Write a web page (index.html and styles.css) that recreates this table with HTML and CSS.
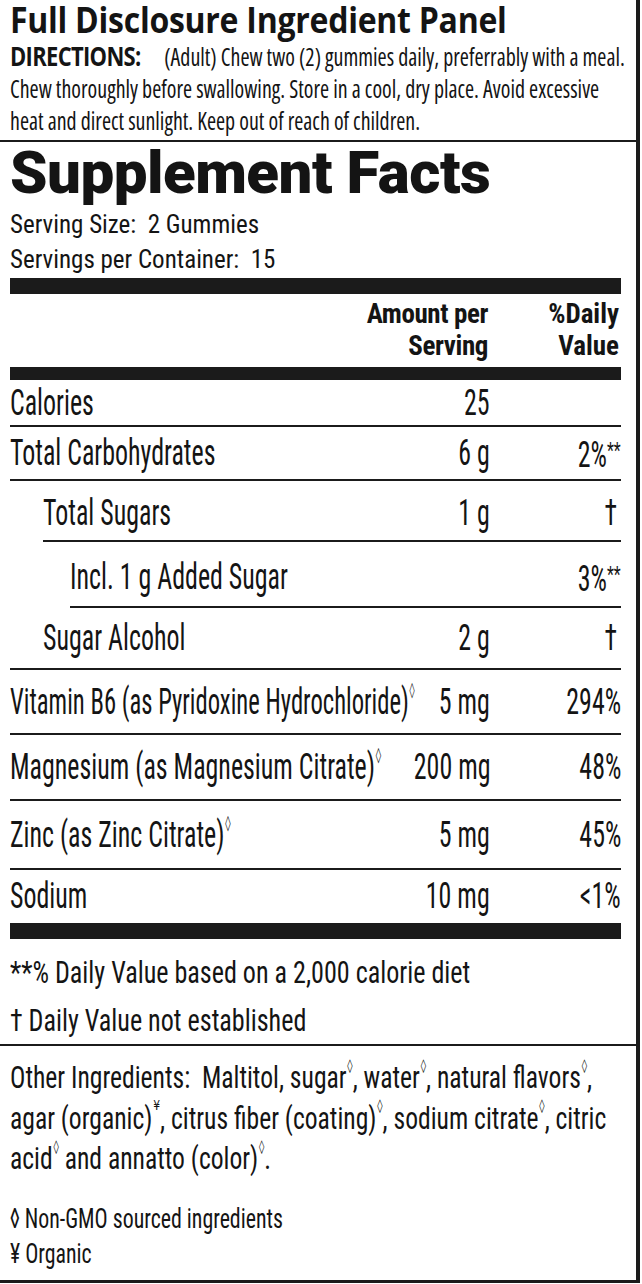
FILE: index.html
```html
<!DOCTYPE html>
<html lang="en">
<head>
<meta charset="utf-8">
<title>Full Disclosure Ingredient Panel</title>
<link rel="stylesheet" href="styles.css">
</head>
<body>
<main class="label">
  <section class="disclosure">
    <h2 class="panel-title"><span class="ln">Full Disclosure Ingredient Panel</span></h2>
    <p class="directions">
      <span class="ln"><b class="dir-head">DIRECTIONS:</b>(Adult) Chew two (2) gummies daily, preferrably with a meal.</span>
      <span class="ln">Chew thoroughly before swallowing. Store in a cool, dry place. Avoid excessive</span>
      <span class="ln">heat and direct sunlight. Keep out of reach of children.</span>
    </p>
  </section>

  <section class="facts">
    <h1 class="facts-title">Supplement Facts</h1>
    <div class="serving">
      <div>Serving Size:&nbsp; 2 Gummies</div>
      <div>Servings per Container:&nbsp; 15</div>
    </div>
    <div class="bar bar-thick"></div>
    <div class="grid head">
      <span></span>
      <span class="h-amt">Amount per<br>Serving</span>
      <span class="h-dv">%Daily<br>Value</span>
    </div>
    <div class="bar bar-mid"></div>

    <div class="grid row r-cal"><span class="n"><span class="sq">Calories</span></span><span class="a"><span class="sq r">25</span></span><span class="d"></span></div>
    <div class="grid row r-carb"><span class="n"><span class="sq">Total Carbohydrates</span></span><span class="a"><span class="sq r">6 g</span></span><span class="d"><span class="sq r">2%<span class="ast">**</span></span></span></div>
    <div class="grid row r-sug sub1"><span class="n"><span class="sq">Total Sugars</span></span><span class="a"><span class="sq r">1 g</span></span><span class="d"><span class="sq r dag">†</span></span></div>
    <div class="grid row r-add sub2"><span class="n"><span class="sq">Incl. 1 g Added Sugar</span></span><span class="a"></span><span class="d"><span class="sq r">3%<span class="ast">**</span></span></span></div>
    <div class="grid row r-alc"><span class="n pad1"><span class="sq">Sugar Alcohol</span></span><span class="a"><span class="sq r">2 g</span></span><span class="d"><span class="sq r dag">†</span></span></div>
    <div class="grid row r-b6"><span class="n"><span class="sq tight">Vitamin B6 (as Pyridoxine Hydrochloride)<sup class="dia">◊</sup></span></span><span class="a"><span class="sq r">5 mg</span></span><span class="d"><span class="sq r">294%</span></span></div>
    <div class="grid row r-mg"><span class="n"><span class="sq">Magnesium (as Magnesium Citrate)<sup class="dia">◊</sup></span></span><span class="a"><span class="sq r">200 mg</span></span><span class="d"><span class="sq r">48%</span></span></div>
    <div class="grid row r-zn"><span class="n"><span class="sq">Zinc (as Zinc Citrate)<sup class="dia">◊</sup></span></span><span class="a"><span class="sq r">5 mg</span></span><span class="d"><span class="sq r">45%</span></span></div>
    <div class="grid row r-na last"><span class="n"><span class="sq">Sodium</span></span><span class="a"><span class="sq r">10 mg</span></span><span class="d"><span class="sq r">&lt;1%</span></span></div>

    <div class="bar bar-thick"></div>
    <div class="notes">
      <span class="ln">**% Daily Value based on a 2,000 calorie diet</span>
      <span class="ln">† Daily Value not established</span>
    </div>
  </section>

  <section class="other">
    <p class="ingredients">
      <span class="ln">Other Ingredients:&nbsp; Maltitol, sugar<sup class="dia">◊</sup>, water<sup class="dia">◊</sup>, natural flavors<sup class="dia">◊</sup>,</span>
      <span class="ln">agar (organic)<sup class="dia">¥</sup>, citrus fiber (coating)<sup class="dia">◊</sup>, sodium citrate<sup class="dia">◊</sup>, citric</span>
      <span class="ln">acid<sup class="dia">◊</sup> and annatto (color)<sup class="dia">◊</sup>.</span>
    </p>
    <p class="legend">
      <span class="ln">◊ Non-GMO sourced ingredients</span>
      <span class="ln">¥ Organic</span>
    </p>
  </section>
</main>
</body>
</html>
```
FILE: styles.css
```css
html, body {
  margin: 0;
  padding: 0;
  background: #ffffff;
}

body {
  color: #141414;
  font-family: "Roboto", "Liberation Sans", sans-serif;
  font-stretch: 75%;
}

.label {
  width: 640px;
  box-sizing: border-box;
  border-right: 4px solid #1b1b1b;
  border-bottom: 3px solid #1b1b1b;
}

/* ---------- disclosure ---------- */
.disclosure {
  padding: 0 0 4px 10px;
  border-bottom: 2px solid #1b1b1b;
  font-family: "Open Sans", "Liberation Sans", sans-serif;
  font-stretch: 75%;
}

.panel-title {
  margin: 0;
  font-size: 35px;
  line-height: 40px;
  font-weight: 700;
  font-stretch: 100%;
  letter-spacing: -0.3px;
}

.panel-title .ln {
  transform: scaleX(0.915);
}

.directions {
  margin: 0;
  font-size: 26px;
  line-height: 32px;
  font-weight: 400;
}

.ln {
  display: block;
  width: max-content;
  white-space: nowrap;
  transform-origin: 0 50%;
}

.directions .ln {
  transform: scaleX(0.845);
}

.dir-head {
  font-weight: 700;
  font-stretch: 94%;
  letter-spacing: -0.8px;
  margin-right: 28px;
}

/* ---------- facts ---------- */
.facts {
  padding: 0 15px 0 10px;
}

.facts-title {
  margin: 3px 0 0;
  font-size: 60px;
  line-height: 56px;
  font-weight: 900;
  font-stretch: 100%;
  letter-spacing: -0.5px;
}

.serving {
  margin-top: 6px;
  font-size: 25px;
  line-height: 35px;
}

.bar {
  background: #1b1b1b;
}

.bar-thick {
  height: 16px;
  margin-top: 1px;
}

.bar-mid {
  height: 13px;
  margin-top: 5px;
}

.grid {
  display: grid;
  grid-template-columns: minmax(0, 1fr) 150px 131px;
  align-items: center;
}

.head {
  padding-top: 4px;
  font-size: 27px;
  line-height: 32px;
  font-weight: 700;
}

.h-amt,
.h-dv {
  text-align: right;
  white-space: nowrap;
}

.h-amt {
  letter-spacing: -0.4px;
  padding-right: 2px;
}

.h-dv {
  padding-right: 2px;
}

.row {
  box-sizing: content-box;
  border-bottom: 2px solid #1b1b1b;
  font-size: 36px;
  line-height: 40px;
}

.row.last {
  border-bottom: 0;
}

.n {
  white-space: nowrap;
}

.a,
.d {
  text-align: right;
  white-space: nowrap;
}

.sq {
  display: inline-block;
  white-space: nowrap;
  transform: scaleX(0.72);
  transform-origin: 0 50%;
}

.sq.tight {
  transform: scaleX(0.685);
}

.sq.r {
  transform-origin: 100% 50%;
}

.dag {
  padding-right: 6px;
}

.ast {
  font-size: 0.62em;
  vertical-align: 0.42em;
}

.dia {
  font-family: "DejaVu Sans", sans-serif;
  font-stretch: 100%;
  font-size: 0.42em;
  vertical-align: 1.25em;
  line-height: 0;
  margin-left: 1px;
}

.sub1 {
  margin-left: 33px;
}

.sub2 {
  margin-left: 60px;
}

.pad1 {
  padding-left: 33px;
}

.r-cal  { height: 45px; }
.r-carb { height: 52px; }
.r-sug  { height: 55px; padding-top: 4px; }
.r-add  { height: 58px; padding-top: 6px; }
.r-alc  { height: 60px; }
.r-b6   { height: 63px; }
.r-mg   { height: 64px; }
.r-zn   { height: 67px; }
.r-na   { height: 52px; }

.notes {
  padding: 9px 0 0;
  font-size: 32px;
  line-height: 48px;
}

.notes .ln {
  transform: scaleX(0.815);
}

/* ---------- other ingredients ---------- */
.other {
  border-top: 2px solid #1b1b1b;
  padding: 11px 15px 9px 10px;
}

.ingredients {
  margin: 0;
  font-size: 32px;
  line-height: 40.5px;
}

.ingredients .ln {
  transform: scaleX(0.8);
}

.ingredients .dia {
  vertical-align: 1.35em;
}

.legend {
  margin: 22px 0 0;
  font-size: 28px;
  line-height: 35px;
}

.legend .ln {
  transform: scaleX(0.78);
}
```
